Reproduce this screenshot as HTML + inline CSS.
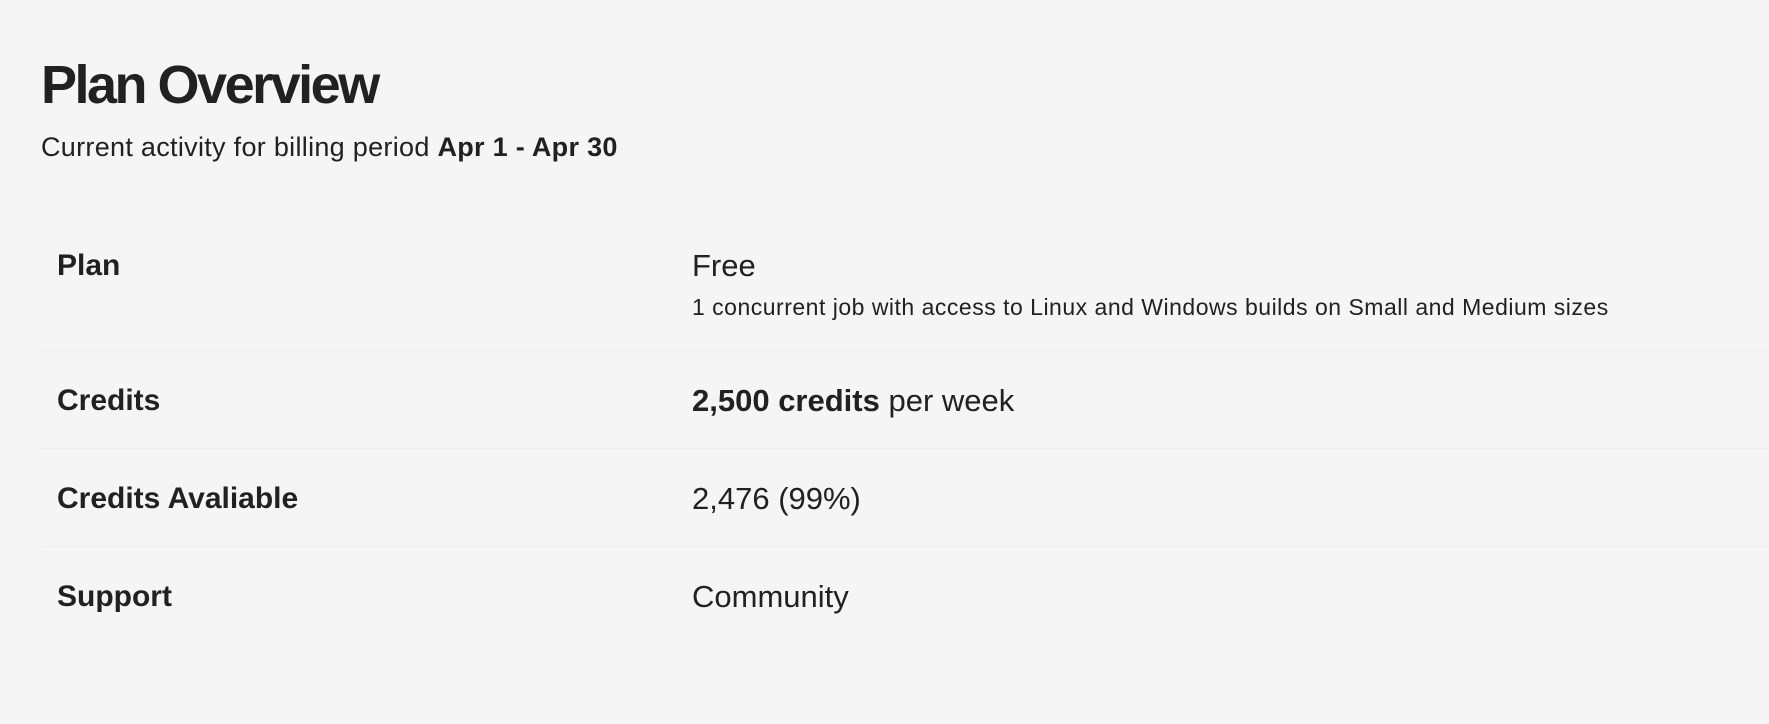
<!DOCTYPE html>
<html><head><meta charset="utf-8"><style>
html,body{margin:0;padding:0;background:#f5f5f5;width:1769px;height:724px;overflow:hidden;font-family:"Liberation Sans",Arial,sans-serif;color:#212121}
.a{position:absolute;line-height:1;white-space:nowrap}
.t{left:41px;top:58px;font-size:54px;font-weight:bold;letter-spacing:-2.5px}
.s{left:41px;top:134px;font-size:27px;letter-spacing:0.3px}
.l{left:57px;font-size:30px;font-weight:bold}
.v{left:692px;font-size:31px}
.d{left:692px;top:296px;font-size:23px;letter-spacing:0.5px}
.hr{position:absolute;left:41px;right:0;height:1px;background:#ebebeb}
</style></head><body>
<div class="a t">Plan Overview</div>
<div class="a s">Current activity for billing period <b>Apr 1 - Apr 30</b></div>
<div class="a l" style="top:251px">Plan</div>
<div class="a v" style="top:250px">Free</div>
<div class="a d">1 concurrent job with access to Linux and Windows builds on Small and Medium sizes</div>
<div class="hr" style="top:350px"></div>
<div class="a l" style="top:386px">Credits</div>
<div class="a v" style="top:385px"><b>2,500 credits</b> per week</div>
<div class="hr" style="top:448px"></div>
<div class="a l" style="top:484px">Credits Avaliable</div>
<div class="a v" style="top:483px">2,476 (99%)</div>
<div class="hr" style="top:546px"></div>
<div class="a l" style="top:582px">Support</div>
<div class="a v" style="top:581px">Community</div>
</body></html>
